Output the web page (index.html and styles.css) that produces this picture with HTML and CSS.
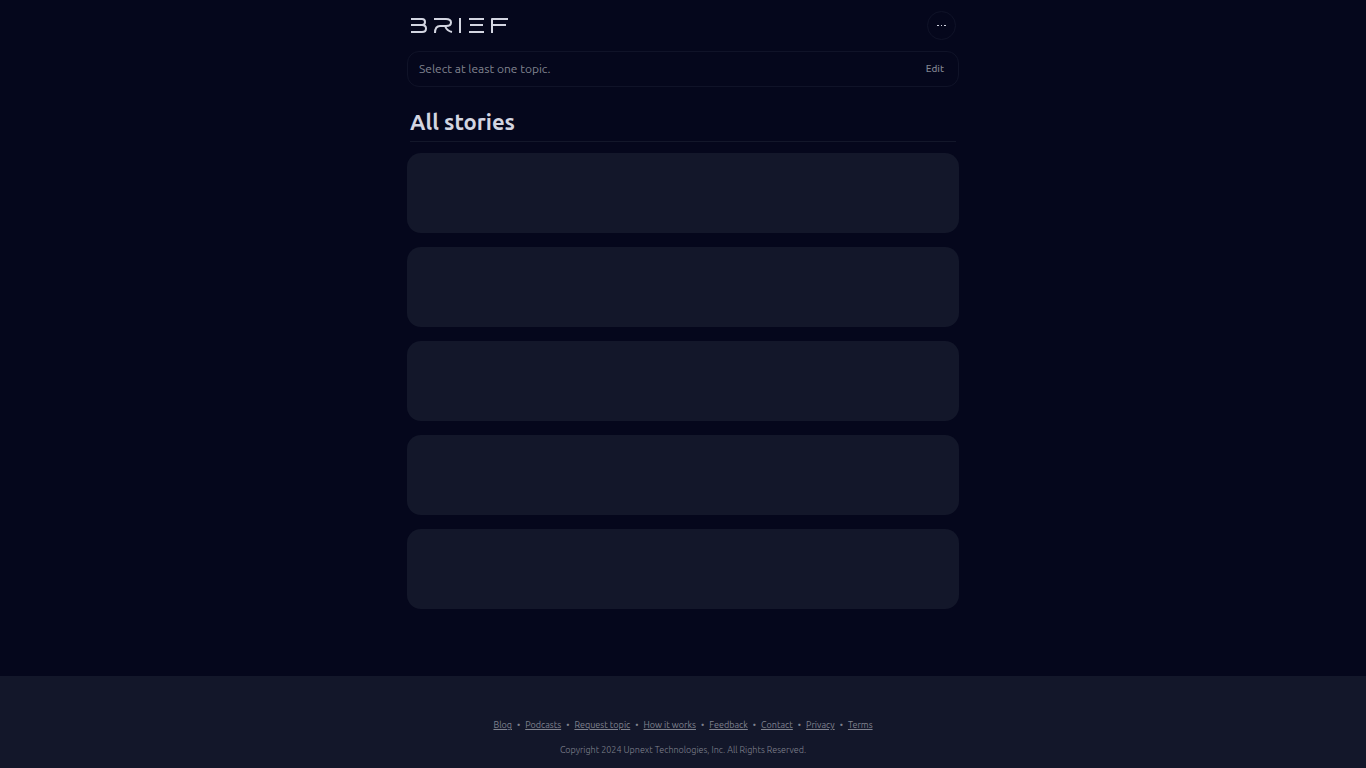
FILE: index.html
```
<!DOCTYPE html>
<html lang="en">

<head>
    <meta charset="UTF-8">
    <meta name="viewport" content="width=device-width, initial-scale=1.0">
    <title>Brief</title>
    <link rel="stylesheet" href="styles.css">
</head>

<body>
    <div class="container">
        <header class="header">
            <a class="logo" href="#" aria-label="Brief">
                <svg width="98" height="15" viewBox="0 0 98 15" fill="none" stroke="currentColor" stroke-width="2" stroke-linejoin="round" aria-hidden="true">
                    <path d="M1 1H12Q15 1 15 4T12 7H1M12 7Q16 7 16 10.500T12 14H1" />
                    <path d="M24 1H36Q41 1 41 4.500T36 8H30Q25 8 25 15M35 8Q37 13 42 14" />
                    <path d="M50 0V15" />
                    <path d="M59 1H74M60 7H73M59 14H74" />
                    <path d="M98 1H82V15M82 7H96" />
                </svg>
            </a>
            <button class="menu-btn" type="button" aria-label="Menu">
                <svg width="9" height="1" viewBox="0 0 9 1" fill="currentColor" aria-hidden="true">
                    <rect x="0" width="2" height="1" />
                    <rect x="4" width="1" height="1" />
                    <rect x="7" width="2" height="1" />
                </svg>
            </button>
        </header>

        <div class="topics">
            <span class="topics-text">Select at least one topic.</span>
            <button class="edit-btn" type="button">Edit</button>
        </div>

        <main>
            <h1 class="title">All stories</h1>
            <div class="stories">
                <div class="story"></div>
                <div class="story"></div>
                <div class="story"></div>
                <div class="story"></div>
                <div class="story"></div>
            </div>
        </main>
    </div>

    <footer class="footer">
        <nav class="footer-nav">
            <a href="#">Blog</a>
            <span>•</span>
            <a href="#">Podcasts</a>
            <span>•</span>
            <a href="#">Request topic</a>
            <span>•</span>
            <a href="#">How it works</a>
            <span>•</span>
            <a href="#">Feedback</a>
            <span>•</span>
            <a href="#">Contact</a>
            <span>•</span>
            <a href="#">Privacy</a>
            <span>•</span>
            <a href="#">Terms</a>
        </nav>
        <p class="copyright">Copyright 2024 Upnext Technologies, Inc. All Rights Reserved.</p>
    </footer>
</body>

</html>
```

FILE: styles.css
```
*,
*::before,
*::after {
    box-sizing: border-box;
}

body {
    margin: 0;
    min-height: 100vh;
    display: flex;
    flex-direction: column;
    background: #05071c;
    color: #d3d5e1;
    font-family: Ubuntu, "Noto Sans", sans-serif;
}

button {
    padding: 0;
    border: none;
    background: none;
    font-family: inherit;
    cursor: pointer;
}

.container {
    width: 100%;
    max-width: 552px;
    margin: 0 auto;
    flex: 1;
}

/* header */
.header {
    display: flex;
    align-items: center;
    justify-content: space-between;
    padding: 11px 3px;
}

.logo {
    display: flex;
    color: #d3d5e1;
}

.menu-btn {
    display: flex;
    align-items: center;
    justify-content: center;
    width: 29px;
    height: 29px;
    border: 1px solid #101328;
    border-radius: 50%;
    color: #d3d5e1;
}

/* topic picker */
.topics {
    display: flex;
    align-items: center;
    justify-content: space-between;
    height: 36px;
    padding: 0 14px 0 11px;
    border: 1px solid #101328;
    border-radius: 12px;
    color: #80838f;
    line-height: 14px;
}

.topics-text {
    font-size: 12px;
}

.edit-btn {
    font-size: 10px;
    font-weight: 500;
    line-height: 14px;
    color: #80838f;
}

/* stories */
.title {
    margin: 19px 3px 11px;
    padding-bottom: 3px;
    border-bottom: 1px solid #13172a;
    font-size: 22px;
    line-height: 32px;
    font-weight: 700;
}

.stories {
    display: flex;
    flex-direction: column;
    gap: 14px;
}

.story {
    height: 80px;
    border-radius: 14px;
    background: #13172a;
}

/* footer */
.footer {
    padding: 41px 16px 10px;
    background: #13172a;
    color: #80838f;
    font-size: 9px;
    line-height: 16px;
    text-align: center;
}

.footer-nav {
    display: flex;
    flex-wrap: wrap;
    justify-content: center;
    gap: 5px;
}

.footer-nav a {
    color: inherit;
}

.copyright {
    margin: 9px 0 0;
    font-weight: 300;
}
```
